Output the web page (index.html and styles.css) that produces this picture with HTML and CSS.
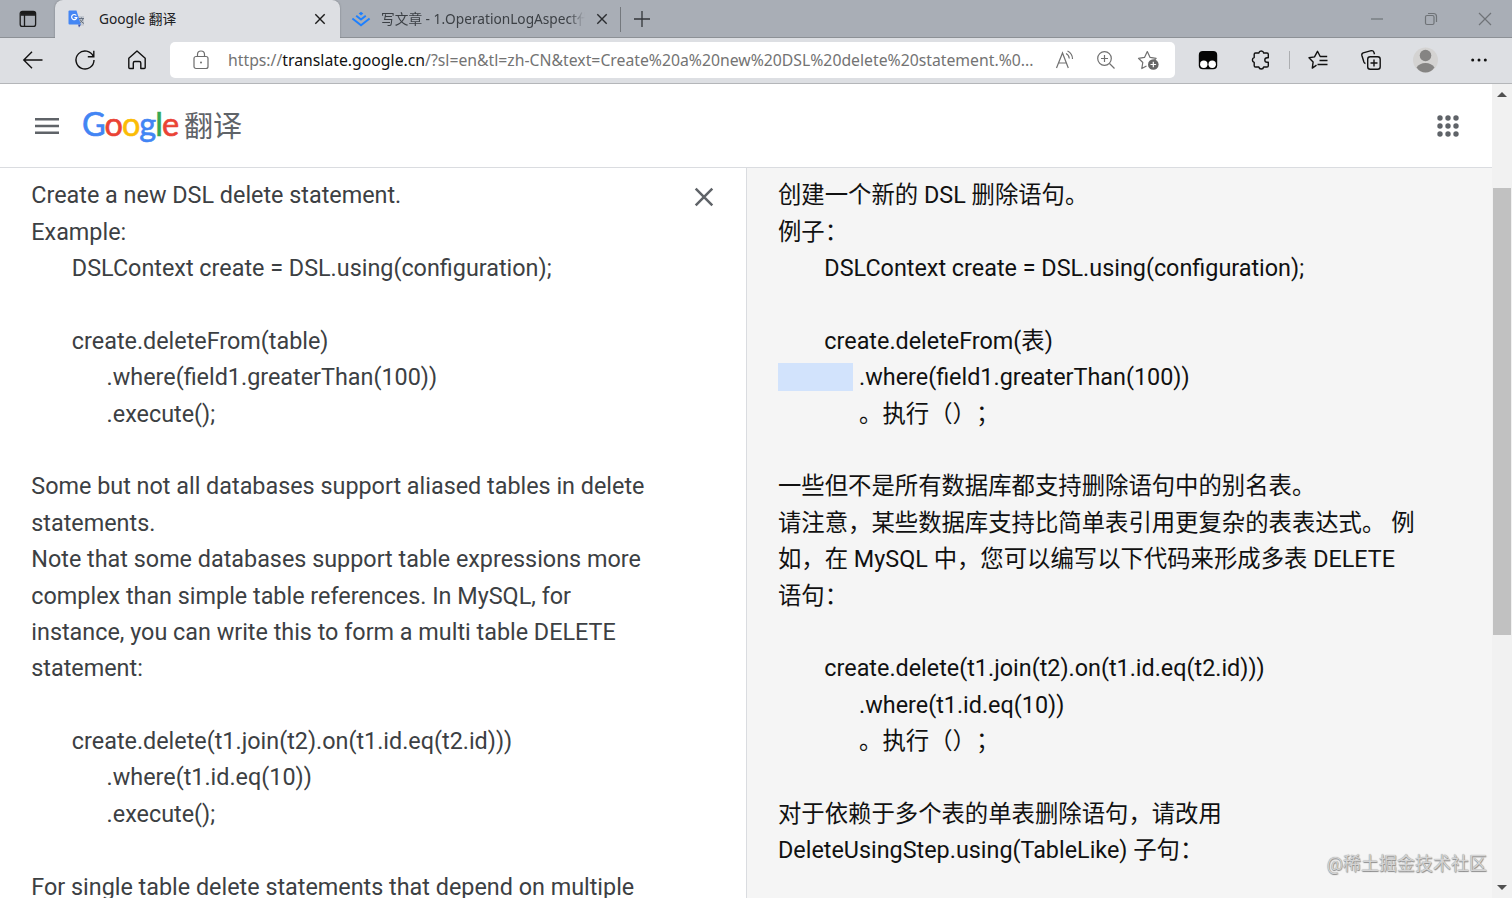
FILE: index.html
```html
<!DOCTYPE html>
<html lang="zh-CN">

<head>
    <meta charset="UTF-8">
    <meta name="viewport" content="width=device-width, initial-scale=1.0">
    <title>Google 翻译</title>
    <link rel="stylesheet" href="styles.css">
</head>

<body>
    <!-- Tab strip -->
    <div class="tab-strip">
        <button class="tab-actions">
            <svg width="18" height="18" viewBox="0 0 18 18" fill="none" stroke="#1b1b1b" stroke-width="1.3">
                <rect x="1.2" y="1.4" width="15.4" height="15" rx="2.2" />
                <path d="M1.5 5h15M5.5 5v11" />
                <path d="M2 3.3h14" stroke-width="3" />
            </svg>
        </button>
        <div class="tab active">
            <svg class="favicon" width="18" height="18" viewBox="0 0 18 18">
                <path d="M9 6h7v9.500h-5z" fill="#c3c8d0" />
                <path d="M11 8.500h5M13.500 7.500v1M15 9q-1 3-3.500 4M12 9.500q1.500 3 4 4" stroke="#677180" stroke-width="1" fill="none" />
                <path d="M10 14.500h3l-2 3z" fill="#3f51a8" />
                <path d="M1.500.5h7l4.300 14H1.500q-1 0-1-1v-12q0-1 1-1z" fill="#4486f4" />
                <path d="M8.300 5.500A2.600 2.600 0 1 0 8.800 7.600H6.400" stroke="#fff" stroke-width="1.200" fill="none" />
            </svg>
            <span class="tab-title">Google 翻译</span>
            <svg class="tab-close" width="12" height="12" viewBox="0 0 12 12" stroke="#1b1b1b" stroke-width="1.400">
                <path d="M1.300 1.300l9.400 9.400M10.700 1.300l-9.400 9.400" />
            </svg>
        </div>
        <div class="tab inactive">
            <svg class="favicon" width="20" height="16" viewBox="0 0 20 16" fill="none" stroke="#1e80ff" stroke-width="2">
                <path d="M10 .8l2.300 1.800L10 4.400 7.700 2.600z" fill="#1e80ff" stroke="none" />
                <path d="M5.200 4.800L10 8.500l4.800-3.700M1.400 7.500L10 14.200l8.600-6.700" />
            </svg>
            <span class="tab-title">写文章 - 1.OperationLogAspect代</span>
            <svg class="tab-close" width="12" height="12" viewBox="0 0 12 12" stroke="#2b2d30" stroke-width="1.400">
                <path d="M1.300 1.300l9.400 9.400M10.700 1.300l-9.400 9.400" />
            </svg>
        </div>
        <div class="new-tab">
            <svg width="18" height="18" viewBox="0 0 18 18" stroke="#33363a" stroke-width="1.300">
                <path d="M9 1v16M1 9h16" />
            </svg>
        </div>
        <div class="window-controls">
            <svg width="14" height="14" viewBox="0 0 14 14" stroke="#6f7377" stroke-width="1.200">
                <path d="M1 7h12" />
            </svg>
            <svg width="14" height="14" viewBox="0 0 14 14" fill="none" stroke="#6f7377" stroke-width="1.200">
                <rect x="1.500" y="3.500" width="8.500" height="9" rx="1.500" />
                <path d="M4 1.500h5.500q3 0 3 3V10" />
            </svg>
            <svg width="14" height="14" viewBox="0 0 14 14" stroke="#6f7377" stroke-width="1.200">
                <path d="M1 1l12 12M13 1L1 13" />
            </svg>
        </div>
    </div>

    <!-- Toolbar -->
    <div class="toolbar">
        <div class="nav-buttons">
            <svg width="22" height="22" viewBox="0 0 22 22" fill="none" stroke="#111" stroke-width="1.400">
                <path d="M20.500 11H2M10 2.700L1.800 11l8.200 8.300" />
            </svg>
            <svg width="22" height="22" viewBox="0 0 22 22" fill="none" stroke="#111" stroke-width="1.400">
                <path d="M19.300 7.500A9 9 0 1 0 20 11M19.800 1.800v6h-6" />
            </svg>
            <svg width="22" height="22" viewBox="0 0 22 22" fill="none" stroke="#111" stroke-width="1.400" stroke-linejoin="round">
                <path d="M2.800 9.200L11 2l8.200 7.200v9.300q0 1-1 1h-3.400V14q0-1.500-1.500-1.500H8.800q-1.500 0-1.500 1.500v5.500H3.800q-1 0-1-1z" />
            </svg>
        </div>
        <div class="address-bar">
            <svg class="lock" width="16" height="20" viewBox="0 0 16 20" fill="none" stroke="#6d6d6d" stroke-width="1.200">
                <rect x="1" y="6.500" width="14" height="12" rx="2" />
                <path d="M4.500 6.500V4.500a3.500 3.500 0 0 1 7 0v2" />
                <circle cx="8" cy="12.500" r="1" fill="#6d6d6d" stroke="none" />
            </svg>
            <span class="url">https://<b>translate.google.cn</b>/?sl=en&amp;tl=zh-CN&amp;text=Create%20a%20new%20DSL%20delete%20statement.%0...</span>
            <svg width="20" height="20" viewBox="0 0 20 20" fill="none" stroke="#707070" stroke-width="1.200">
                <path d="M1.500 18L7.500 3l5.800 15M3.600 13h7.700" />
                <path d="M11 3.500q3 1.500 3.300 5M12.500 1q5 2.500 5 8" />
            </svg>
            <svg width="20" height="20" viewBox="0 0 20 20" fill="none" stroke="#707070" stroke-width="1.200">
                <circle cx="8.500" cy="8.500" r="6.800" />
                <path d="M13.500 13.500l5 5M8.500 5v7M5 8.500h7" />
            </svg>
            <svg width="22" height="22" viewBox="0 0 22 22" fill="none" stroke="#707070" stroke-width="1.200" stroke-linejoin="round">
                <path d="M9.500 17l-4.700 2.500 1-6L1.500 9.300l6-.9L10.300 2.500l2.800 5.900 6 .9-1.600 1.700" />
                <circle cx="16.300" cy="15.500" r="5.300" fill="#666" stroke="none" />
                <path d="M16.300 12.700v5.600M13.500 15.500h5.600" stroke="#fff" />
            </svg>
        </div>
        <div class="toolbar-actions">
            <svg width="22" height="22" viewBox="0 0 22 22">
                <rect x="1.800" y="2" width="18.400" height="18.300" rx="4" fill="#050505" />
                <circle cx="6.800" cy="15.200" r="3.700" fill="#fff" />
                <circle cx="15.200" cy="15.200" r="3.700" fill="#fff" />
            </svg>
            <svg width="22" height="22" viewBox="0 0 22 22" fill="none" stroke="#111" stroke-width="1.400" stroke-linejoin="round">
                <path d="M5.500 4h3.300a2.500 2.500 0 0 1 4.900 0H17q1.300 0 1.300 1.300v3.400h-1.200a2.300 2.300 0 0 0 0 4.600h1.200v3.400q0 1.300-1.300 1.300h-3.300a2.500 2.500 0 0 1-4.900 0H5.500q-1.300 0-1.300-1.300v-3.300a2.500 2.500 0 0 1 0-4.800V5.300Q4.200 4 5.500 4z" />
            </svg>
            <span class="divider"></span>
            <svg width="22" height="22" viewBox="0 0 22 22" fill="none" stroke="#111" stroke-width="1.400" stroke-linejoin="round">
                <path d="M9.500 16.200l-4.200 2.900.8-6L2 8.800l5.500-.9L10.500 2.300l2.700 5.200h7M12.500 11.500h8M10.500 15.500h10" />
            </svg>
            <svg width="22" height="22" viewBox="0 0 22 22" fill="none" stroke="#111" stroke-width="1.400">
                <rect x="7.700" y="7.700" width="12.500" height="12.500" rx="2.500" />
                <path d="M14 10.500v7M10.500 14h7M5.500 14.500q-1.200-.3-1.600-1.500L1.900 6.500q-.5-2 1.300-2.600l8-2.200q2-.4 2.700 1.500l.6 2" />
            </svg>
            <svg width="26" height="26" viewBox="0 0 26 26">
                <circle cx="12.500" cy="13" r="12.500" fill="#d4d3d2" />
                <circle cx="12.500" cy="8.500" r="5.800" fill="#858483" />
                <path d="M3.500 20.500q3-4.500 9-4.500t9 4.500q-3.500 5-9 5t-9-5z" fill="#858483" />
            </svg>
            <svg width="18" height="18" viewBox="0 0 18 18" fill="#111">
                <circle cx="2.700" cy="9" r="1.500" />
                <circle cx="9" cy="9" r="1.500" />
                <circle cx="15.300" cy="9" r="1.500" />
            </svg>
        </div>
    </div>

    <div class="viewport">
        <main class="page">
            <header class="header">
                <svg class="menu" width="24" height="18" viewBox="0 0 24 18" stroke="#5f6368" stroke-width="2.500">
                    <path d="M0 2.200h24M0 9h24M0 15.800h24" />
                </svg>
                <div class="logo">
                    <span class="google"><span class="blue">G</span><span class="red">o</span><span class="yellow">o</span><span class="blue">g</span><span class="green">l</span><span class="red">e</span></span>
                    <span class="product">翻译</span>
                </div>
                <svg class="apps" width="22" height="22" viewBox="0 0 22 22" fill="#5f6368">
                    <circle cx="3" cy="3" r="2.700" /><circle cx="11" cy="3" r="2.700" /><circle cx="19" cy="3" r="2.700" />
                    <circle cx="3" cy="11" r="2.700" /><circle cx="11" cy="11" r="2.700" /><circle cx="19" cy="11" r="2.700" />
                    <circle cx="3" cy="19" r="2.700" /><circle cx="11" cy="19" r="2.700" /><circle cx="19" cy="19" r="2.700" />
                </svg>
            </header>
            <div class="panels">
                <section class="source">
                    <div class="text">Create a new DSL delete statement.
Example:
       DSLContext create = DSL.using(configuration);

       create.deleteFrom(table)
             .where(field1.greaterThan(100))
             .execute();

Some but not all databases support aliased tables in delete
statements.
Note that some databases support table expressions more
complex than simple table references. In MySQL, for
instance, you can write this to form a multi table DELETE
statement:

       create.delete(t1.join(t2).on(t1.id.eq(t2.id)))
             .where(t1.id.eq(10))
             .execute();

For single table delete statements that depend on multiple</div>
                    <svg class="clear" width="20" height="20" viewBox="0 0 20 20" stroke="#5f6368" stroke-width="2.500">
                        <path d="M1.700 1.700l16.600 16.600M18.300 1.700L1.700 18.300" />
                    </svg>
                </section>
                <section class="result">
                    <div class="text">创建一个新的 DSL 删除语句。
例子：
        DSLContext create = DSL.using(configuration);

        create.deleteFrom(表)
<span class="highlight">             </span> .where(field1.greaterThan(100))
              。执行（）；

一些但不是所有数据库都支持删除语句中的别名表。
请注意，某些数据库支持比简单表引用更复杂的表表达式。 例
如，在 MySQL 中，您可以编写以下代码来形成多表 DELETE
语句：

        create.delete(t1.join(t2).on(t1.id.eq(t2.id)))
              .where(t1.id.eq(10))
              。执行（）；

对于依赖于多个表的单表删除语句，请改用
DeleteUsingStep.using(TableLike) 子句：</div>
                </section>
            </div>
        </main>
        <div class="scrollbar">
            <span class="arrow-up"></span>
            <span class="thumb"></span>
            <span class="arrow-down"></span>
        </div>
    </div>
    <div class="watermark">@稀土掘金技术社区</div>
</body>

</html>
```
FILE: styles.css
```css
* {
    box-sizing: border-box;
}

body {
    margin: 0;
    height: 898px;
    display: flex;
    flex-direction: column;
    overflow: hidden;
    position: relative;
    background-color: #fff;
    font-family: Roboto, "Noto Sans CJK SC", sans-serif;
}

svg {
    display: block;
    flex-shrink: 0;
}

/* Tab strip */
.tab-strip {
    display: flex;
    flex-shrink: 0;
    height: 38px;
    background-color: #a9aeb6;
    box-shadow: inset 0 -1px 0 #8d9196;
    font-family: "Noto Sans", "Noto Sans CJK SC", sans-serif;
}

.tab-actions {
    width: 55px;
    padding: 0 0 0 19px;
    border: none;
    background: none;
}

.tab {
    display: flex;
    align-items: center;
    font-size: 13.7px;
    color: #202124;
}

.tab.active {
    width: 285px;
    padding: 0 14px 0 13px;
    background-color: #dddfe3;
    border-radius: 8px 8px 0 0;
    box-shadow: 0 0 2px #74787d;
    clip-path: inset(0 -3px 0 -3px);
}

.tab.inactive {
    width: 281px;
    padding: 0 12px 0 11px;
    color: #3c4045;
    border-right: 1px solid #74787d;
    border-image: linear-gradient(transparent 8px, #74787d 8px, #74787d 31px, transparent 31px) 1;
}

.tab-title {
    flex: 1;
    margin-left: 13px;
    padding-bottom: 2px;
    white-space: nowrap;
    overflow: hidden;
}

.inactive .tab-title {
    margin-left: 10px;
    margin-right: 11px;
    -webkit-mask-image: linear-gradient(to right, #000 92%, transparent);
    mask-image: linear-gradient(to right, #000 92%, transparent);
}

.new-tab {
    display: flex;
    align-items: center;
    padding-left: 12px;
}

.window-controls {
    display: flex;
    align-items: center;
    gap: 40px;
    margin-left: auto;
    padding-right: 20px;
}

/* Toolbar */
.toolbar {
    display: flex;
    flex-shrink: 0;
    align-items: center;
    height: 46px;
    padding-bottom: 1px;
    background-color: #dddfe3;
    border-bottom: 1px solid #b4b6b9;
}

.nav-buttons {
    display: flex;
    gap: 30px;
    padding-left: 22px;
    width: 170px;
}

.address-bar {
    display: flex;
    align-items: center;
    width: 1005px;
    height: 36px;
    padding: 0 14px 0 23px;
    gap: 21px;
    background-color: #fff;
    border-radius: 5px;
}

.url {
    width: 806px;
    margin-left: -2px;
    font-family: "Noto Sans", sans-serif;
    font-size: 15.77px;
    white-space: nowrap;
    color: #737373;
}

.url b {
    font-weight: normal;
    color: #111;
}

.toolbar-actions {
    display: flex;
    flex: 1;
    align-items: center;
    gap: 31px;
    padding-left: 22px;
}

.divider {
    width: 1px;
    height: 18px;
    margin: 0 -14px;
    background-color: #acaeb1;
}

/* Page */
.viewport {
    display: flex;
    flex: 1;
    min-height: 0;
}

.page {
    display: flex;
    flex-direction: column;
    width: 1492px;
}

.header {
    display: flex;
    flex-shrink: 0;
    align-items: center;
    height: 84px;
    padding: 1px 33px 0 35px;
    border-bottom: 1px solid #dadce0;
}

.logo {
    display: flex;
    align-items: center;
    margin-left: 23px;
    height: 50px;
    padding-bottom: 5px;
}

.google {
    width: 102px;
    font-family: Lato, sans-serif;
    font-size: 32.5px;
    letter-spacing: -1px;
    -webkit-text-stroke: 0.6px;
}

.blue {
    color: #4285f4;
}

.red {
    color: #ea4335;
}

.yellow {
    color: #fbbc05;
}

.green {
    color: #34a853;
}

.product {
    font-size: 29px;
    color: #5f6368;
}

.apps {
    margin-left: auto;
}

.panels {
    display: flex;
    flex: 1;
    min-height: 0;
    overflow: hidden;
}

.source {
    display: flex;
    justify-content: space-between;
    width: 747px;
    padding: 9.4px 32px 0 31.3px;
    color: #3c4043;
    border-right: 1px solid #dadce0;
}

.result {
    flex: 1;
    padding: 9.4px 0 0 31px;
    background-color: #f5f5f5;
    color: #111;
}

.text {
    font-size: 23.36px;
    line-height: 36.38px;
    white-space: pre;
    text-spacing-trim: space-all;
}

.clear {
    margin-top: 10px;
}

.highlight {
    background-color: #d2e3fc;
}

/* Scrollbar */
.scrollbar {
    display: flex;
    flex-direction: column;
    align-items: center;
    width: 20px;
    padding: 8px 0 8px;
    background-color: #f1f1f1;
}

.arrow-up {
    border: 5px solid transparent;
    border-top: none;
    border-bottom-color: #505050;
}

.thumb {
    width: 18px;
    height: 447px;
    margin-top: 91px;
    background-color: #c1c1c1;
}

.arrow-down {
    margin-top: auto;
    border: 5px solid transparent;
    border-bottom: none;
    border-top-color: #505050;
}

.watermark {
    position: absolute;
    right: 25px;
    bottom: 21px;
    font-size: 18px;
    line-height: 26px;
    color: #d4d4d4;
    text-shadow: 0 0 1px #888, 0.5px 0.5px 1px #888;
}
```
